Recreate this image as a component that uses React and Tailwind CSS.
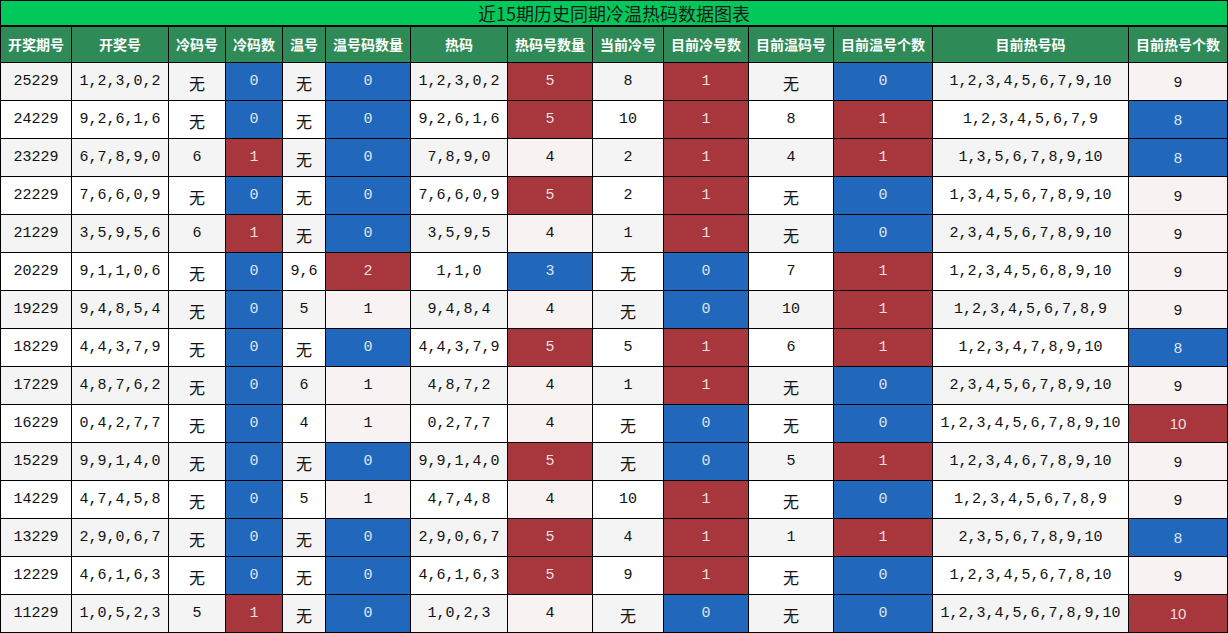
import React from 'react';

const widths = ['w-[70px]', 'w-[96px]', 'w-[56px]', 'w-[56px]', 'w-[42px]', 'w-[84px]', 'w-[96px]', 'w-[84px]', 'w-[70px]', 'w-[84px]', 'w-[84px]', 'w-[98px]', 'w-[195px]', 'w-[98px]'];

const headers = ['开奖期号', '开奖号', '冷码号', '冷码数', '温号', '温号码数量', '热码', '热码号数量', '当前冷号', '目前冷号数', '目前温码号', '目前温号个数', '目前热号码', '目前热号个数'];

const rows = [
  ['25229', '1,2,3,0,2', '无', '0', '无', '0', '1,2,3,0,2', '5', '8', '1', '无', '0', '1,2,3,4,5,6,7,9,10', '9'],
  ['24229', '9,2,6,1,6', '无', '0', '无', '0', '9,2,6,1,6', '5', '10', '1', '8', '1', '1,2,3,4,5,6,7,9', '8'],
  ['23229', '6,7,8,9,0', '6', '1', '无', '0', '7,8,9,0', '4', '2', '1', '4', '1', '1,3,5,6,7,8,9,10', '8'],
  ['22229', '7,6,6,0,9', '无', '0', '无', '0', '7,6,6,0,9', '5', '2', '1', '无', '0', '1,3,4,5,6,7,8,9,10', '9'],
  ['21229', '3,5,9,5,6', '6', '1', '无', '0', '3,5,9,5', '4', '1', '1', '无', '0', '2,3,4,5,6,7,8,9,10', '9'],
  ['20229', '9,1,1,0,6', '无', '0', '9,6', '2', '1,1,0', '3', '无', '0', '7', '1', '1,2,3,4,5,6,8,9,10', '9'],
  ['19229', '9,4,8,5,4', '无', '0', '5', '1', '9,4,8,4', '4', '无', '0', '10', '1', '1,2,3,4,5,6,7,8,9', '9'],
  ['18229', '4,4,3,7,9', '无', '0', '无', '0', '4,4,3,7,9', '5', '5', '1', '6', '1', '1,2,3,4,7,8,9,10', '8'],
  ['17229', '4,8,7,6,2', '无', '0', '6', '1', '4,8,7,2', '4', '1', '1', '无', '0', '2,3,4,5,6,7,8,9,10', '9'],
  ['16229', '0,4,2,7,7', '无', '0', '4', '1', '0,2,7,7', '4', '无', '0', '无', '0', '1,2,3,4,5,6,7,8,9,10', '10'],
  ['15229', '9,9,1,4,0', '无', '0', '无', '0', '9,9,1,4,0', '5', '无', '0', '5', '1', '1,2,3,4,6,7,8,9,10', '9'],
  ['14229', '4,7,4,5,8', '无', '0', '5', '1', '4,7,4,8', '4', '10', '1', '无', '0', '1,2,3,4,5,6,7,8,9', '9'],
  ['13229', '2,9,0,6,7', '无', '0', '无', '0', '2,9,0,6,7', '5', '4', '1', '1', '1', '2,3,5,6,7,8,9,10', '8'],
  ['12229', '4,6,1,6,3', '无', '0', '无', '0', '4,6,1,6,3', '5', '9', '1', '无', '0', '1,2,3,4,5,6,7,8,10', '9'],
  ['11229', '1,0,5,2,3', '5', '1', '无', '0', '1,0,2,3', '4', '无', '0', '无', '0', '1,2,3,4,5,6,7,8,9,10', '10'],
];

// which value gets which tone, per coloured column
const tones = {
  3: { 0: 'blue', 1: 'red' },
  5: { 0: 'blue', 1: 'pink', 2: 'red' },
  7: { 3: 'blue', 4: 'pink', 5: 'red' },
  9: { 0: 'blue', 1: 'red' },
  11: { 0: 'blue', 1: 'red' },
  13: { 8: 'blue', 9: 'pink', 10: 'red' },
};

const toneClass = {
  blue: 'bg-[#2167bb] text-[#dfe6ee]',
  red: 'bg-[#a8363d] text-[#f0dfdf]',
  pink: 'bg-[#f8f2f2] text-[#111]',
};

const Cell = ({ value, col, striped }) => {
  const tone = tones[col] && tones[col][value];
  const bg = tone ? toneClass[tone] : striped ? 'bg-[#f4f4f4] text-[#111]' : 'bg-white text-[#111]';
  const font = col === 13
    ? "font-['Liberation_Sans','Noto_Sans_CJK_SC',sans-serif] text-[15px]"
    : "font-['Liberation_Mono','Noto_Sans_CJK_SC',monospace] text-[15px]";
  const isWu = value === '无';
  return (
    <div className={`${widths[col]} ${bg} ${font} flex items-center justify-center`}>
      <span className={isWu ? "pt-[3px] font-['Noto_Sans_CJK_SC',sans-serif] text-[16px]" : 'pt-[2px]'}>{value}</span>
    </div>
  );
};

const App = () => {
  return (
    <div className="w-[1228px] h-[633px] bg-black p-px flex flex-col overflow-hidden">
      <div className="h-[24px] bg-[#00c85a] flex items-center justify-center font-['Noto_Sans_CJK_SC',sans-serif] text-[18px] text-[#1a1a1a] leading-none">
        近15期历史同期冷温热码数据图表
      </div>
      <div className="mt-[2px] flex flex-col gap-px">
        <div className="h-[35px] flex gap-px">
          {headers.map((h, i) => (
            <div
              key={h}
              className={`${widths[i]} bg-[#2e8b57] flex items-center justify-center text-white font-bold text-[14px] font-['Noto_Sans_CJK_SC',sans-serif] whitespace-nowrap`}
            >
              {h}
            </div>
          ))}
        </div>
        {rows.map((r, ri) => (
          <div key={r[0]} className="h-[37px] flex gap-px">
            {r.map((v, ci) => (
              <Cell key={ci} value={v} col={ci} striped={ri % 2 === 0} />
            ))}
          </div>
        ))}
      </div>
    </div>
  );
};

export default App;
